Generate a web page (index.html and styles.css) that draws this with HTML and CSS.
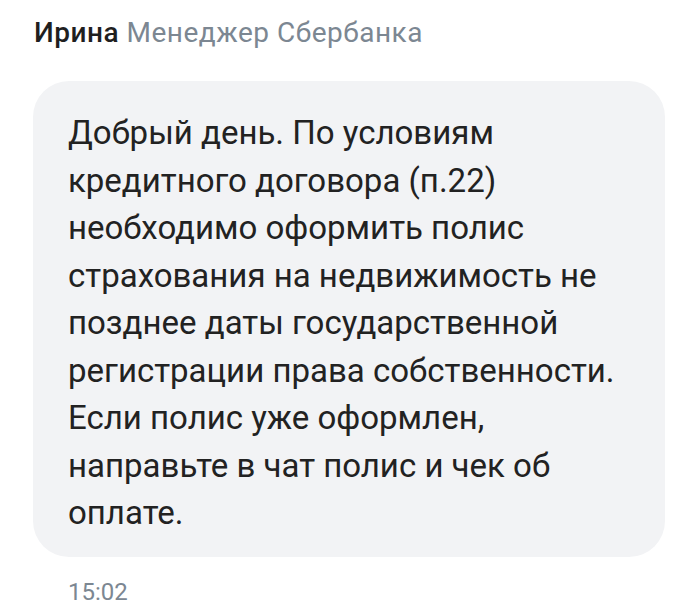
FILE: index.html
```html
<!DOCTYPE html>
<html lang="ru">
<head>
<meta charset="utf-8">
<link rel="stylesheet" href="styles.css">
</head>
<body>
<div class="chat">
  <div class="sender"><span class="name">Ирина</span> <span class="role">Менеджер Сбербанка</span></div>
  <div class="bubble">
    <p class="text">Добрый день. По условиям<br>кредитного договора (п.22)<br>необходимо оформить полис<br>страхования на недвижимость не<br>позднее даты государственной<br>регистрации права собственности.<br>Если полис уже оформлен,<br>направьте в чат полис и чек об<br>оплате.</p>
  </div>
  <div class="time">15:02</div>
</div>
</body>
</html>
```
FILE: styles.css
```css
html, body {
  margin: 0;
  padding: 0;
  background: #ffffff;
}
body {
  font-family: Roboto, "Noto Sans", sans-serif;
  width: 700px;
  height: 614px;
  overflow: hidden;
}
.chat {
  padding: 15px 35px 0 33px;
  display: flex;
  flex-direction: column;
}
.sender {
  font-size: 28px;
  line-height: 36px;
  letter-spacing: 0.5px;
  padding-left: 1px;
  white-space: nowrap;
}
.name {
  font-weight: 500;
  color: #1f1f1f;
}
.role {
  color: #7c8792;
}
.bubble {
  margin-top: 30px;
  background: #f2f3f5;
  border-radius: 36px;
  padding: 28px 20px 20px 35px;
}
.text {
  margin: 0;
  font-size: 33px;
  line-height: 47.5px;
  color: #222222;
  white-space: nowrap;
}
.time {
  margin-top: 20px;
  padding-left: 35px;
  font-size: 24px;
  line-height: 30px;
  color: #7c8792;
}
```
